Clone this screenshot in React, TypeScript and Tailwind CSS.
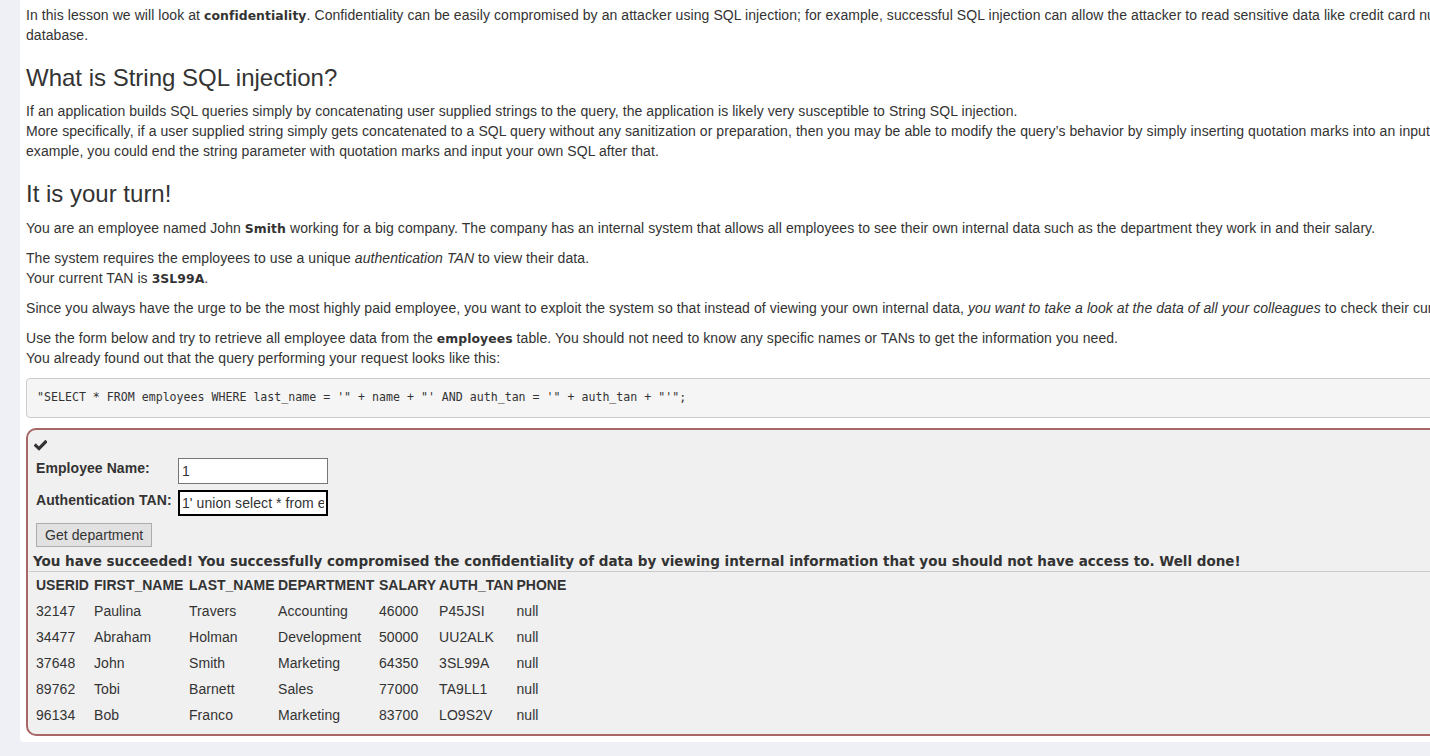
import React from "react";

const ROWS = [
  ["32147", "Paulina", "Travers", "Accounting", "46000", "P45JSI", "null"],
  ["34477", "Abraham", "Holman", "Development", "50000", "UU2ALK", "null"],
  ["37648", "John", "Smith", "Marketing", "64350", "3SL99A", "null"],
  ["89762", "Tobi", "Barnett", "Sales", "77000", "TA9LL1", "null"],
  ["96134", "Bob", "Franco", "Marketing", "83700", "LO9S2V", "null"],
];

const HEADERS = ["USERID", "FIRST_NAME", "LAST_NAME", "DEPARTMENT", "SALARY", "AUTH_TAN", "PHONE"];
const COL_WIDTHS = ["w-[58px]", "w-[95px]", "w-[89px]", "w-[101px]", "w-[59px]", "w-[77px]", "w-[60px]"];

const QUERY = `"SELECT * FROM employees WHERE last_name = '" + name + "' AND auth_tan = '" + auth_tan + "'";`;

function B({ children }: { children: React.ReactNode }) {
  return <b className="font-bold font-['DejaVu_Sans',sans-serif] text-[12.4px] leading-[1]">{children}</b>;
}

function CheckIcon() {
  return (
    <svg width="13" height="11" viewBox="0 0 13 11" className="block">
      <polyline
        points="1.8,5.6 5,8.6 11.4,2"
        fill="none"
        stroke="#333"
        strokeWidth="3.2"
        strokeLinecap="square"
      />
    </svg>
  );
}

export default function App() {
  return (
    <div className="h-[756px] w-[1430px] overflow-hidden bg-[#eef0f5] pl-[20px] font-['Liberation_Sans',Arial,sans-serif] text-[14px] leading-[20px] tracking-[0.07px] text-[#333]">
      <div className="w-[1620px] bg-white pl-[6px] pr-[20px] pt-[5px] pb-[6px] rounded-bl-[4px]">
        <p className="whitespace-nowrap mb-[10px]">
          In this lesson we will look at <B>confidentiality</B>. Confidentiality can be easily compromised by an attacker
          using SQL injection; for example, successful SQL injection can allow the attacker to read sensitive data like credit
          card numbers from a
          <br />
          database.
        </p>

        <h3 className="mt-[20px] mb-[10px] text-[24px] leading-[26.4px] font-normal tracking-normal">What is String SQL injection?</h3>
        <p className="whitespace-nowrap mb-[10px]">
          If an application builds SQL queries simply by concatenating user supplied strings to the query, the application is
          likely very susceptible to String SQL injection.
          <br />
          More specifically, if a user supplied string simply gets concatenated to a SQL query without any sanitization or
          preparation, then you may be able to modify the query’s behavior by simply inserting quotation marks into an input
          field. For
          <br />
          example, you could end the string parameter with quotation marks and input your own SQL after that.
        </p>

        <h3 className="mt-[20px] mb-[10px] text-[24px] leading-[26.4px] font-normal tracking-normal">It is your turn!</h3>
        <p className="whitespace-nowrap mb-[10px]">
          You are an employee named John <B>Smith</B> working for a big company. The company has an internal system that allows
          all employees to see their own internal data such as the department they work in and their salary.
        </p>
        <p className="whitespace-nowrap mb-[10px]">
          The system requires the employees to use a unique <i>authentication TAN</i> to view their data.
          <br />
          Your current TAN is <B>3SL99A</B>.
        </p>
        <p className="whitespace-nowrap mb-[10px]">
          Since you always have the urge to be the most highly paid employee, you want to exploit the system so that instead of
          viewing your own internal data, <i>you want to take a look at the data of all your colleagues</i> to check their
          current salaries.
        </p>
        <p className="whitespace-nowrap mb-[10px]">
          Use the form below and try to retrieve all employee data from the <B>employees</B> table. You should not need to know
          any specific names or TANs to get the information you need.
          <br />
          You already found out that the query performing your request looks like this:
        </p>

        <pre className="mb-[10px] rounded-[4px] border border-[#ccc] bg-[#f5f5f5] px-[10px] py-[9.5px] font-['DejaVu_Sans_Mono',monospace] text-[11.6px] leading-[19px] tracking-normal text-[#333]">
          {QUERY}
        </pre>

        <div className="mt-[1px] rounded-[10px] border-2 border-[#a86666] bg-[#f0f0f0] pl-[5px] pb-[6px]">
          <div className="pt-[10px] pl-[1px] h-[22px]">
            <CheckIcon />
          </div>

          <div className="mt-[6px] flex flex-col gap-[6px]">
            <div className="flex items-start">
              <label className="w-[145px] pl-[3px] font-bold">Employee Name:</label>
              <input
                readOnly
                value="1"
                className="h-[26px] w-[150px] border border-[#767676] bg-white px-[3px] text-[14px] text-[#333] outline-none"
              />
            </div>
            <div className="flex items-start">
              <label className="w-[145px] pl-[3px] font-bold">Authentication TAN:</label>
              <input
                readOnly
                value="1' union select * from employees; --"
                className="h-[26px] w-[150px] border-2 border-black bg-white px-[2px] text-[14px] text-[#333] outline-none"
              />
            </div>
          </div>

          <button className="ml-[3px] mt-[7px] h-[24px] border border-[#adadad] bg-[#e1e1e1] px-[8px] text-[14px] leading-[20px] text-[#333]">
            Get department
          </button>

          <div className="mt-[4px] font-['DejaVu_Sans',sans-serif] text-[13.5px] font-bold leading-[20px] tracking-normal text-[#333]">
            You have succeeded! You successfully compromised the confidentiality of data by viewing internal information that
            you should not have access to. Well done!
          </div>

          <div className="-ml-[4px] border-t border-[#cccccc]" />

          <table className="table-fixed border-collapse">
            <thead>
              <tr className="h-[26px]">
                {HEADERS.map((h, i) => (
                  <th key={h} className={`${COL_WIDTHS[i]} pl-[3px] text-left font-bold tracking-normal whitespace-nowrap`}>
                    {h}
                  </th>
                ))}
              </tr>
            </thead>
            <tbody>
              {ROWS.map((row) => (
                <tr key={row[0]} className="h-[26px]">
                  {row.map((cell, i) => (
                    <td key={i} className="pl-[3px] text-left whitespace-nowrap">
                      {cell}
                    </td>
                  ))}
                </tr>
              ))}
            </tbody>
          </table>
        </div>
      </div>
    </div>
  );
}
